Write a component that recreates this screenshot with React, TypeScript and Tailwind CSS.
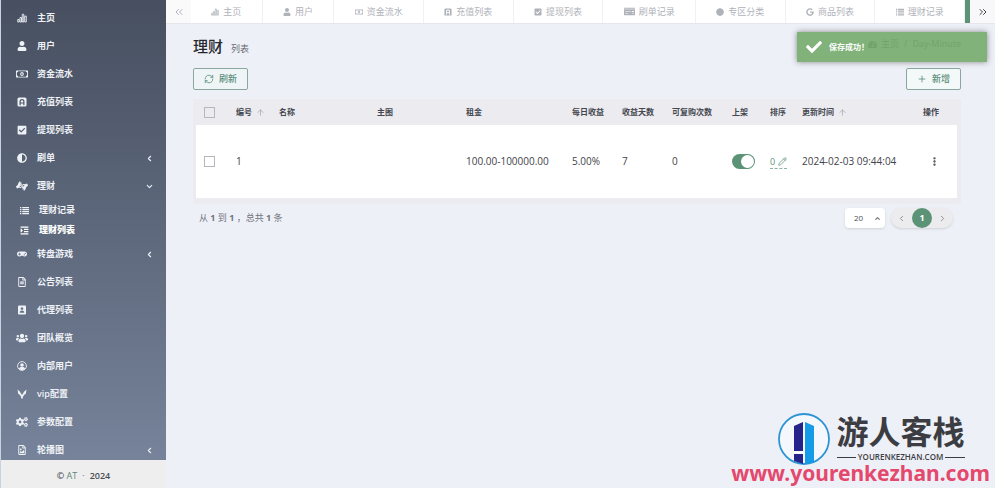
import { useState } from 'react';
import type { ComponentType } from 'react';
import { ChevronDown, ChevronLeft, ChevronRight, ChevronUp, ChevronsLeft, ChevronsRight, ArrowUp, EllipsisVertical, Pencil, Plus, RefreshCw } from 'lucide-react';
import {
  FaAdjust,
  FaAmericanSignLanguageInterpreting,
  FaCheck,
  FaCheckSquare,
  FaCircle,
  FaCogs,
  FaGamepad,
  FaGoogle,
  FaIndent,
  FaMoneyCheck,
  FaRegFileAlt,
  FaRegFileImage,
  FaRegMoneyBillAlt,
  FaTachometerAlt,
  FaUser,
  FaUsers,
} from 'react-icons/fa';

type IconType = ComponentType<{ className?: string }>;

interface MenuItem {
  label: string;
  icon: IconType;
  wide?: boolean;
  arrow?: 'left' | 'down';
  children?: { label: string; icon: IconType; active?: boolean }[];
}

const BarsIcon: IconType = ({ className }) => (
  <svg viewBox="0 0 20 20" className={className} fill="none" stroke="currentColor" strokeWidth="1.8">
    <path d="M1.500 13h3v5h-3zM6 9h3v9h-3zM10.500 2.500h3v15.500h-3zM15.500 6h3v12h-3z" />
  </svg>
);

const LetterBoxIcon: IconType = ({ className }) => (
  <svg viewBox="0 0 20 20" className={className} fill="currentColor" fillRule="evenodd">
    <path d="M4 1h12a3 3 0 0 1 3 3v12a3 3 0 0 1-3 3H4a3 3 0 0 1-3-3V4a3 3 0 0 1 3-3zM5 16.500V9a5 5 0 0 1 10 0v7.500h-2.500V13h-5v3.500zM7.500 10.800h5V9a2.500 2.500 0 0 0-5 0z" />
  </svg>
);

const PersonBoxIcon: IconType = ({ className }) => (
  <svg viewBox="0 0 20 20" className={className} fill="currentColor" fillRule="evenodd">
    <path d="M4 1h12a2 2 0 0 1 2 2v14a2 2 0 0 1-2 2H4a2 2 0 0 1-2-2V3a2 2 0 0 1 2-2zM10 4.500a2.700 2.700 0 1 0 .01 0zM5.500 15.500h9c0-3-1.500-4.700-4.500-4.700s-4.500 1.700-4.500 4.700z" />
  </svg>
);

const PersonCircleIcon: IconType = ({ className }) => (
  <svg viewBox="0 0 20 20" className={className}>
    <circle cx="10" cy="10" r="8.800" fill="none" stroke="currentColor" strokeWidth="1.800" />
    <circle cx="10" cy="8" r="3.600" fill="currentColor" />
    <path d="M4 15.500c1-3 3-3.500 6-3.500s5 .5 6 3.500c-3 3.300-9 3.300-12 0z" fill="currentColor" />
  </svg>
);

const ForkIcon: IconType = ({ className }) => (
  <svg viewBox="0 0 20 20" className={className} fill="currentColor">
    <path d="M1 1l4.500 4L10 12 14.500 5 19 1l-1.500 9-2 .5-3.700 5V19H8.200v-3.500l-3.700-5-2-.5z" />
  </svg>
);

const ListIcon: IconType = ({ className }) => (
  <svg viewBox="0 0 20 20" className={className} fill="currentColor">
    <path d="M0 2h3v3H0zM5 2h15v3H5zM0 6.500h3v3H0zM5 6.500h15v3H5zM0 11h3v3H0zM5 11h15v3H5zM0 15.500h3v3H0zM5 15.500h15v3H5z" />
  </svg>
);

const menu: MenuItem[] = [
  { label: '主页', icon: BarsIcon },
  { label: '用户', icon: FaUser },
  { label: '资金流水', icon: FaRegMoneyBillAlt, wide: true },
  { label: '充值列表', icon: LetterBoxIcon },
  { label: '提现列表', icon: FaCheckSquare },
  { label: '刷单', icon: FaAdjust, arrow: 'left' },
  {
    label: '理财',
    icon: FaAmericanSignLanguageInterpreting,
    wide: true,
    arrow: 'down',
    children: [
      { label: '理财记录', icon: ListIcon },
      { label: '理财列表', icon: FaIndent, active: true },
    ],
  },
  { label: '转盘游戏', icon: FaGamepad, arrow: 'left' },
  { label: '公告列表', icon: FaRegFileAlt },
  { label: '代理列表', icon: PersonBoxIcon },
  { label: '团队概览', icon: FaUsers, wide: true },
  { label: '内部用户', icon: PersonCircleIcon },
  { label: 'vip配置', icon: ForkIcon },
  { label: '参数配置', icon: FaCogs, wide: true },
  { label: '轮播图', icon: FaRegFileImage, arrow: 'left' },
];

const tabs: { label: string; icon: IconType; wide?: boolean }[] = [
  { label: '主页', icon: BarsIcon },
  { label: '用户', icon: FaUser },
  { label: '资金流水', icon: FaRegMoneyBillAlt },
  { label: '充值列表', icon: LetterBoxIcon },
  { label: '提现列表', icon: FaCheckSquare },
  { label: '刷单记录', icon: FaMoneyCheck, wide: true },
  { label: '专区分类', icon: FaCircle },
  { label: '商品列表', icon: FaGoogle },
  { label: '理财记录', icon: ListIcon },
];

const Sidebar = () => (
  <aside className="flex h-screen w-[166px] shrink-0 flex-col border-l border-[#c9d2e0]">
    <nav className="min-h-0 flex-1 overflow-hidden bg-linear-to-b from-[#474f60] to-[#76839a] pt-1 text-[9px] font-semibold text-[#eef1f6]">
      <ul>
        {menu.map(({ label, icon: Icon, wide, arrow, children }) => (
          <li key={label}>
            <a href="#" className="flex h-7 items-center pr-3 pl-[15px]">
              <span className="flex w-3 justify-center">
                <Icon className={wide ? 'size-3 shrink-0' : 'size-[10px] shrink-0'} />
              </span>
              <span className="ml-[9px] flex-1">{label}</span>
              {arrow === 'left' && <ChevronLeft className="size-[9px]" strokeWidth={3} />}
              {arrow === 'down' && <ChevronDown className="size-[9px]" strokeWidth={3} />}
            </a>
            {children && (
              <ul>
                {children.map(({ label: sub, icon: SubIcon, active }) => (
                  <li key={sub}>
                    <a href="#" className={active ? 'flex h-5 items-center pl-[19px] font-extrabold text-white' : 'flex h-5 items-center pl-[19px]'}>
                      <SubIcon className="size-[9px] shrink-0" />
                      <span className="ml-[10px]">{sub}</span>
                    </a>
                  </li>
                ))}
              </ul>
            )}
          </li>
        ))}
      </ul>
    </nav>
    <footer className="flex h-7 items-center justify-center bg-[#eeeeee] pt-1 text-[9px] font-semibold text-[#4b4f56]">
      ©&nbsp;<a href="#" className="font-normal text-[#5f8479]">AT</a>
      <span className="mx-[5px] text-[#8a8f96]">·</span> 2024
    </footer>
  </aside>
);

const TabBar = () => (
  <div className="flex h-6 shrink-0 border-b border-[#e6e6ec] bg-white text-[9px] text-[#b0b2b9]">
    <button type="button" aria-label="«" className="flex w-[25px] shrink-0 items-center justify-center bg-[#fafafa]">
      <ChevronsLeft className="size-3" />
    </button>
    <div className="flex min-w-0 flex-1 overflow-hidden">
      {tabs.map(({ label, icon: Icon, wide }) => (
        <a key={label} href="#" className="flex flex-auto items-center justify-center gap-1 border-r border-[#f1f1f5] whitespace-nowrap">
          <Icon className={wide ? 'size-[11px]' : 'size-2'} />
          {label}
        </a>
      ))}
      <span className="w-[5px] shrink-0 bg-[#5c9276]" />
    </div>
    <button type="button" aria-label="»" className="flex w-[25px] shrink-0 items-center justify-center bg-[#f8f8fa] text-[#3f434a]">
      <ChevronsRight className="size-3" />
    </button>
  </div>
);

const headers = ['编号', '名称', '主图', '租金', '每日收益', '收益天数', '可复购次数', '上架', '排序', '更新时间', '操作'];
const sortable = ['编号', '更新时间'];

const Check = ({ label }: { label: string }) => (
  <input type="checkbox" aria-label={label} className="ml-2 block size-[11px] appearance-none border border-[#b5b7bd] bg-transparent checked:bg-[#5c9276]" />
);

const PlanTable = () => {
  const [on, setOn] = useState(true);
  return (
    <div className="bg-[#ecebf0] pr-1 pb-[6px] pl-[3px]">
      <table className="w-full table-fixed text-left whitespace-nowrap">
        <colgroup>
          <col className="w-[40px]" />
          <col className="w-[43px]" />
          <col className="w-[98px]" />
          <col className="w-[89px]" />
          <col className="w-[106px]" />
          <col className="w-[50px]" />
          <col className="w-[50px]" />
          <col className="w-[60px]" />
          <col className="w-[38px]" />
          <col className="w-[32px]" />
          <col className="w-[121px]" />
          <col className="w-[34px]" />
        </colgroup>
        <thead>
          <tr className="h-[26px] text-[8px] text-[#44474f]">
            <th><Check label="全选" /></th>
            {headers.map((h) => (
              <th key={h} className="font-bold">
                <span className="inline-flex items-center gap-1">
                  {h}
                  {sortable.includes(h) && <ArrowUp className="size-[9px] text-[#a5a8ae]" />}
                </span>
              </th>
            ))}
          </tr>
        </thead>
        <tbody>
          <tr className="h-[73px] bg-white text-[10px] text-[#3f434b]">
            <td><Check label="选择 1" /></td>
            <td>1</td>
            <td />
            <td />
            <td>100.00-100000.00</td>
            <td>5.00%</td>
            <td>7</td>
            <td>0</td>
            <td>
              <label className="relative block h-[15px] w-[23px] rounded-full bg-[#5c9276]">
                <input type="checkbox" aria-label="上架" checked={on} onChange={() => setOn(!on)} className="peer sr-only" />
                <span className="absolute top-px left-px size-[13px] rounded-full bg-white peer-checked:left-[9px]" />
              </label>
            </td>
            <td>
              <a href="#" className="inline-flex items-center gap-[3px] border-b border-dashed border-[#8fb3a1] text-[9px] text-[#5c9276]">
                0 <Pencil className="size-[9px]" />
              </a>
            </td>
            <td>2024-02-03 09:44:04</td>
            <td>
              <button type="button" aria-label="操作" className="ml-[6px] block">
                <EllipsisVertical className="size-[11px]" strokeWidth={3} />
              </button>
            </td>
          </tr>
        </tbody>
      </table>
    </div>
  );
};

const Pager = () => (
  <div className="mt-1 flex items-center justify-between pr-2 pl-[6px] text-[9px] text-[#70747c]">
    <p>
      从 <b>1</b> 到 <b>1</b> ，总共 <b>1</b> 条
    </p>
    <div className="flex items-center gap-[6px]">
      <div className="relative">
        <select aria-label="20" className="h-5 w-10 appearance-none rounded-sm bg-white pl-[9px] text-[8px] text-[#4b4f56] shadow-sm">
          <option>20</option>
          <option>50</option>
          <option>100</option>
        </select>
        <ChevronUp className="pointer-events-none absolute top-[7px] right-1 size-[7px]" strokeWidth={4} />
      </div>
      <div className="flex h-5 items-center rounded-full bg-[#ececee] shadow-sm">
        <button type="button" aria-label="上一页" className="flex w-[21px] justify-center"><ChevronLeft className="size-[9px]" /></button>
        <button type="button" className="size-5 rounded-full bg-[#5c9276] font-bold text-white">1</button>
        <button type="button" aria-label="下一页" className="flex w-[21px] justify-center"><ChevronRight className="size-[9px]" /></button>
      </div>
    </div>
  </div>
);

const Toast = () => (
  <div role="status" className="absolute top-8 right-2 flex h-[30px] w-[190px] items-center bg-[#74ab6b]/90 pl-[9px] text-[8px] font-bold text-white shadow-[0_0_6px_#888]">
    <FaCheck className="mr-[7px] size-4" />
    保存成功！
  </div>
);

const SiteMark = () => (
  <div className="pointer-events-none absolute right-[5px] bottom-2 flex flex-col items-center">
    <div className="flex items-start gap-[6px] pl-5">
      <svg viewBox="0 0 54 54" className="size-[54px]">
        <circle cx="27" cy="27" r="25" fill="#f4f7fc" stroke="#2c94d4" strokeWidth="1.800" />
        <path d="M17 14l9-4v29h-9z" fill="#26248b" />
        <path d="M28 10l9 4v36l-9 2z" fill="#159be8" />
        <path d="M17 42h9v10l-9-3z" fill="#26248b" />
        <path d="M17 40.500h11" stroke="#fff" strokeWidth="1.500" />
      </svg>
      <div className="flex flex-col items-center text-[#3c3d42]">
        <div className="text-[32px] leading-[40px] font-bold">游人客栈</div>
        <div className="flex w-full items-center gap-[2px] text-[8px] leading-[10px] font-semibold">
          <span className="h-px flex-1 bg-[#3c3d42]" />
          YOURENKEZHAN.COM
          <span className="h-px flex-1 bg-[#3c3d42]" />
        </div>
      </div>
    </div>
    <div className="font-['Noto_Sans'] text-[21px] leading-[14px] font-bold text-[#e4486c]">www.yourenkezhan.com</div>
  </div>
);

export default function App() {
  return (
    <div className="relative flex h-screen overflow-hidden bg-[#eef0f8] font-['Open_Sans','Noto_Sans_CJK_SC',sans-serif]">
      <Sidebar />
      <div className="flex min-w-0 flex-1 flex-col">
        <TabBar />
        <main className="flex-1 pr-[34px] pl-[27px]">
          <header className="flex h-11 items-center justify-between">
            <h1 className="flex items-baseline gap-2 text-[15px] font-medium text-[#26282e]">
              理财 <small className="text-[9px] font-normal text-[#666a72]">列表</small>
            </h1>
            <nav className="flex items-center gap-1 pb-1 text-[9px] text-[#4b5a52]">
              <FaTachometerAlt className="size-[9px]" />
              <a href="#">主页</a>
              <span className="mx-px">/</span>
              <span>Day-Minute</span>
            </nav>
          </header>
          <div className="mb-[9px] flex items-center justify-between text-[9px] font-medium text-[#5c8f7b]">
            <button type="button" className="flex h-[22px] items-center gap-[5px] rounded-xs border border-[#8aa79d] bg-[#eff5f6] px-[10px]">
              <RefreshCw className="size-[10px]" /> 刷新
            </button>
            <button type="button" className="flex h-[22px] items-center gap-[5px] rounded-xs border border-[#8aa79d] bg-[#f3f8f8] px-[10px]">
              <Plus className="size-[10px]" /> 新增
            </button>
          </div>
          <PlanTable />
          <Pager />
        </main>
      </div>
      <Toast />
      <SiteMark />
    </div>
  );
}
